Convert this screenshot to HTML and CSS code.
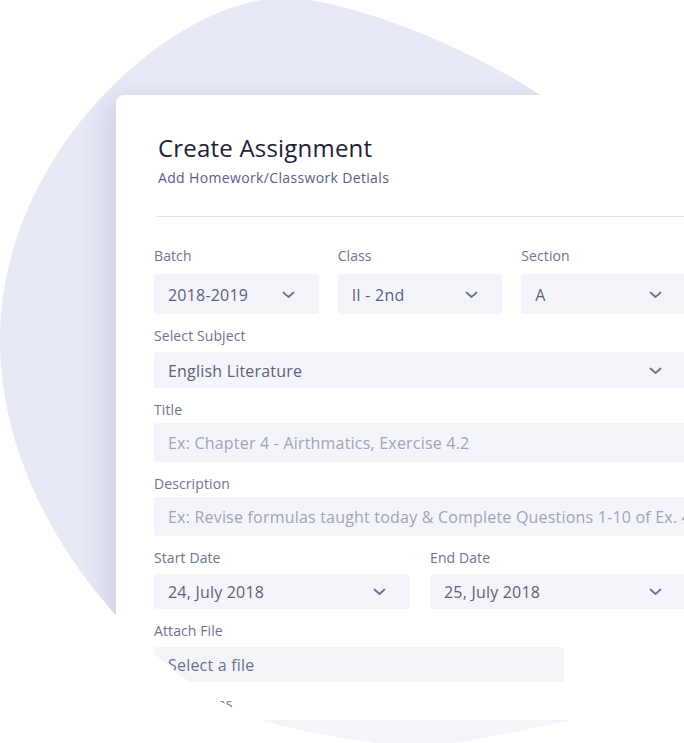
FILE: index.html
```html
<!DOCTYPE html>
<html lang="en">
<head>
    <meta charset="UTF-8">
    <meta name="viewport" content="width=device-width, initial-scale=1.0">
    <title>Create Assignment</title>
    <link rel="stylesheet" href="styles.css">
</head>
<body>
    <div class="scene">
        <main class="card">
            <header class="card-head">
                <h1>Create Assignment</h1>
                <p>Add Homework/Classwork Detials</p>
            </header>

            <form class="form">
                <div class="row row-3">
                    <div class="group">
                        <label class="label label-wide">Batch</label>
                        <div class="control control-lg">
                            <span class="value">2018-2019</span>
                            <svg class="chevron" width="13" height="8" viewBox="0 0 13 8"><path d="M1.5 1.5l5 4.5 5-4.5" fill="none" stroke="#6f7391" stroke-width="1.8" stroke-linecap="round" stroke-linejoin="round"/></svg>
                        </div>
                    </div>
                    <div class="group">
                        <label class="label label-wide">Class</label>
                        <div class="control control-lg">
                            <span class="value">II - 2nd</span>
                            <svg class="chevron" width="13" height="8" viewBox="0 0 13 8"><path d="M1.5 1.5l5 4.5 5-4.5" fill="none" stroke="#6f7391" stroke-width="1.8" stroke-linecap="round" stroke-linejoin="round"/></svg>
                        </div>
                    </div>
                    <div class="group">
                        <label class="label label-wide">Section</label>
                        <div class="control control-lg">
                            <span class="value">A</span>
                            <svg class="chevron" width="13" height="8" viewBox="0 0 13 8"><path d="M1.5 1.5l5 4.5 5-4.5" fill="none" stroke="#6f7391" stroke-width="1.8" stroke-linecap="round" stroke-linejoin="round"/></svg>
                        </div>
                    </div>
                </div>

                <div class="group">
                    <label class="label">Select Subject</label>
                    <div class="control">
                        <span class="value">English Literature</span>
                        <svg class="chevron" width="13" height="8" viewBox="0 0 13 8"><path d="M1.5 1.5l5 4.5 5-4.5" fill="none" stroke="#6f7391" stroke-width="1.8" stroke-linecap="round" stroke-linejoin="round"/></svg>
                    </div>
                </div>

                <div class="group">
                    <label class="label label-tight">Title</label>
                    <div class="control control-text">
                        <span class="placeholder">Ex: Chapter 4 - Airthmatics, Exercise 4.2</span>
                    </div>
                </div>

                <div class="group">
                    <label class="label label-tight">Description</label>
                    <div class="control control-text">
                        <span class="placeholder">Ex: Revise formulas taught today &amp; Complete Questions 1-10 of Ex. 4</span>
                    </div>
                </div>

                <div class="row row-2">
                    <div class="group">
                        <label class="label">Start Date</label>
                        <div class="control control-sm">
                            <span class="value">24, July 2018</span>
                            <svg class="chevron" width="13" height="8" viewBox="0 0 13 8"><path d="M1.5 1.5l5 4.5 5-4.5" fill="none" stroke="#6f7391" stroke-width="1.8" stroke-linecap="round" stroke-linejoin="round"/></svg>
                        </div>
                    </div>
                    <div class="group">
                        <label class="label">End Date</label>
                        <div class="control control-sm">
                            <span class="value">25, July 2018</span>
                            <svg class="chevron" width="13" height="8" viewBox="0 0 13 8"><path d="M1.5 1.5l5 4.5 5-4.5" fill="none" stroke="#6f7391" stroke-width="1.8" stroke-linecap="round" stroke-linejoin="round"/></svg>
                        </div>
                    </div>
                </div>

                <div class="group">
                    <label class="label">Attach File</label>
                    <div class="control control-sm control-file">
                        <span class="file-text">Select a file</span>
                    </div>
                </div>

                <div class="group">
                    <label class="label">Instructions</label>
                    <div class="control control-area"></div>
                </div>
            </form>
        </main>
    </div>
</body>
</html>
```

FILE: styles.css
```css
body {
    margin: 0;
    background-color: #fff;
    font-family: "Open Sans", "Noto Sans", sans-serif;
    overflow: hidden;
}

.scene {
    width: 684px;
    height: 743px;
    overflow: hidden;
    background-color: #e7e9f5;
    padding: 95px 0 0 116px;
    box-sizing: border-box;

    /* blob outline, the card is clipped by it too */
    clip-path: path("M 0 340 C 0 150, 175 -2, 284 -2 C 345 -2, 465 45, 540 95 L 760 260 L 760 600 L 572 720 C 520 730, 460 745, 420 745 C 360 745, 300 730, 260 720 C 150 680, 0 520, 0 340 Z");
}

.card {
    width: 608px;
    min-height: 760px;
    background-color: #fff;
    border-radius: 8px 0 0 0;
    box-shadow: -8px 6px 26px rgba(90, 98, 170, 0.2);
    padding: 38px 38px 0;
    box-sizing: border-box;
}

.card-head {
    margin-left: 3px;
    padding: 0 0 29px 1px;
    border-bottom: solid 1px #e1e2e9;
}

.card-head > h1 {
    margin: 0;
    font-size: 24px;
    line-height: 30px;
    font-weight: 500;
    letter-spacing: 0.2px;
    color: #1e2134;
}

.card-head > p {
    margin: 6px 0 0;
    font-size: 14px;
    line-height: 18px;
    font-weight: 500;
    letter-spacing: 0.35px;
    color: #585d8c;
}

.form {
    display: flex;
    flex-direction: column;
    gap: 14px;
    margin-top: 31px;
}

.row {
    display: grid;
    gap: 19px;
}

.row-3 {
    grid-template-columns: repeat(3, 1fr);
}

.row-2 {
    grid-template-columns: repeat(2, 1fr);
    gap: 20px;
}

.group {
    display: flex;
    flex-direction: column;
}

.label {
    font-size: 14px;
    line-height: 16px;
    letter-spacing: 0.1px;
    color: #6f738e;
    margin-bottom: 8px;
}

.label-wide {
    margin-bottom: 10px;
}

.label-tight {
    margin-bottom: 5px;
}

.control {
    height: 36px;
    background-color: #f4f5fa;
    border-radius: 3px;
    display: flex;
    align-items: center;
    padding: 1px 24px 0 14px;
    box-sizing: border-box;
    font-size: 16px;
    letter-spacing: 0.2px;
    white-space: nowrap;
    overflow: hidden;
}

.control-lg {
    height: 40px;
}

.control-text {
    height: 39px;
}

.control-sm {
    height: 35px;
}

.control-file {
    width: 410px;
}

.control-area {
    height: 90px;
}

.value {
    flex: 1;
    color: #5c6080;
}

.placeholder {
    color: #a0a3b8;
}

.file-text {
    color: #6c7090;
}

.chevron {
    flex: none;
}
```
